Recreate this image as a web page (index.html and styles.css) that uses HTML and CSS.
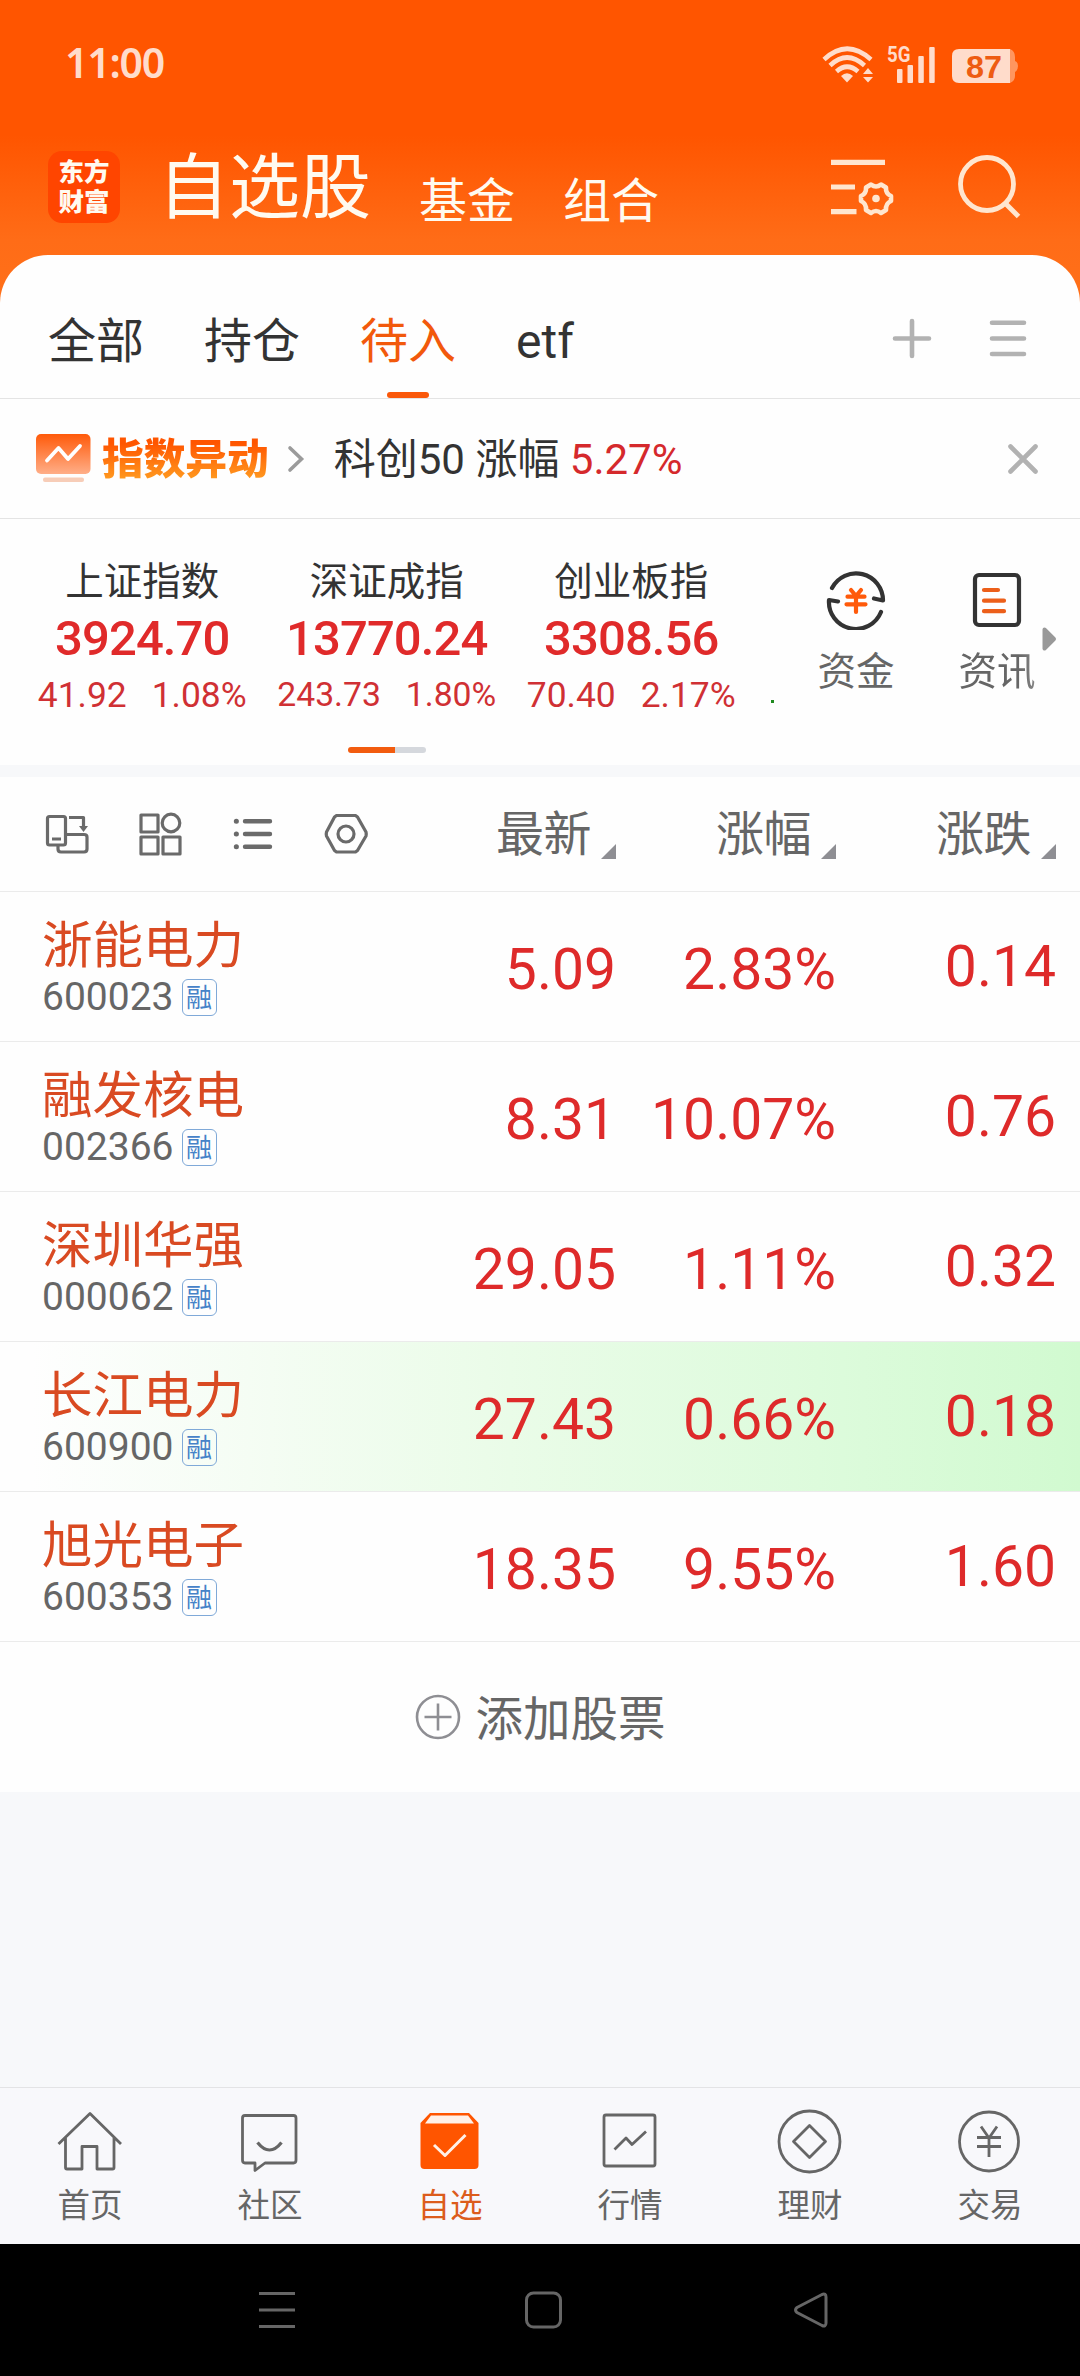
FILE: index.html
```html
<!DOCTYPE html>
<html lang="zh-CN">
<head>
<meta charset="utf-8">
<title>自选股</title>
<link rel="stylesheet" href="styles.css">
</head>
<body>
<div class="screen">
  <header class="top">
    <div class="status">
      <span class="clock">11:00</span>
      <svg class="status-icons" viewBox="820 40 200 46" width="200" height="46">
        <g fill="none" stroke="#ffdccb" stroke-width="4.6">
          <path d="M824 58.500Q847 37 871 58.500"/>
          <path d="M830 64.500Q847 48.500 864.500 64.500"/>
          <path d="M836.500 70.500Q847 61 858 70.500"/>
        </g>
        <g fill="#ffdccb">
          <path d="M841 75Q847 69.500 853 75L847 81.500Z"/>
          <path d="M868 67l5 6h-10zM868 81.500l5-5.500h-10z"/>
          <rect x="897" y="68" width="5.500" height="14" rx="1"/>
          <rect x="907.500" y="64" width="5.500" height="18" rx="1"/>
          <rect x="918.300" y="55" width="5.500" height="27" rx="1"/>
          <rect x="929.200" y="46" width="5.500" height="36" rx="1"/>
          <path d="M959 48H1010V82H959Q952 82 952 75V55Q952 48 959 48Z"/>
        </g>
        <path d="M1010 48Q1015 50 1015 56V60Q1018 61 1018 65T1015 71V75Q1015 80 1010 82Z" fill="#ff965f"/>
        <text class="net" x="887" y="61" textLength="23.500" lengthAdjust="spacingAndGlyphs">5G</text>
        <text class="charge" x="966" y="77" textLength="36" lengthAdjust="spacingAndGlyphs">87</text>
      </svg>
    </div>
    <div class="titlebar">
      <div class="logo"><span>东方</span><span>财富</span></div>
      <h1 class="title">自选股</h1>
      <span class="section">基金</span>
      <span class="section">组合</span>
      <svg class="title-icons" viewBox="828 155 194 66" width="194" height="66" fill="none" stroke="#ffe6cf">
        <path d="M831 168.300H885M831 193H855M831 217.700H856.500" stroke-width="5.200"/>
        <path d="M871 191Q876 195 881 191L886 194Q885.500 200 891 202.500V207.500Q885.500 210 886 216.500L881 219.500Q876 215.500 871 219.500L866 216.500Q866.500 210 861 207.500V202.500Q866.500 200 866 194Z" stroke-width="4.600" stroke-linejoin="round" transform="translate(0 -.5)"/>
        <circle cx="876" cy="204.500" r="3.800" fill="#ffe6cf" stroke="none"/>
        <circle cx="987" cy="190" r="26.500" stroke-width="4.800"/>
        <path d="M1005 209L1018.500 222.500" stroke-width="5"/>
      </svg>
    </div>
  </header>

  <main class="sheet">
    <nav class="tabs">
      <span class="tab">全部</span>
      <span class="tab">持仓</span>
      <span class="tab active">待入</span>
      <span class="tab">etf</span>
      <svg class="tab-icons" viewBox="890 315 140 46" width="140" height="46" fill="none" stroke="#b2b2b2" stroke-width="4.600" stroke-linecap="round">
        <path d="M895 338.500H929M912 321V356M992 322.700H1024M992 338.500H1024M992 354H1024"/>
      </svg>
    </nav>

    <section class="alert">
      <svg class="alert-icon" viewBox="36 434 55 51" width="55" height="51">
        <defs><linearGradient id="badge" x1="0" y1="0" x2="0" y2="1"><stop offset="0" stop-color="#ff5a0a"/><stop offset="1" stop-color="#ffae88"/></linearGradient></defs>
        <rect x="36" y="435" width="54.500" height="40" rx="5" fill="url(#badge)"/>
        <rect x="43" y="478.500" width="41" height="4.500" rx="2" fill="#f7cdb8"/>
        <path d="M47 461.500L58.500 449 68 460 80 447" fill="none" stroke="#fff" stroke-width="3.800" stroke-linecap="round" stroke-linejoin="round"/>
      </svg>
      <span class="alert-title">指数异动</span>
      <svg class="chevron" viewBox="0 0 18 28" width="18" height="28" fill="none" stroke="#9b9b9b" stroke-width="3.600" stroke-linecap="round"><path d="M3 3L14.500 14 3 25"/></svg>
      <span class="alert-text">科创50 涨幅 <em>5.27%</em></span>
      <svg class="close" viewBox="0 0 32 32" width="32" height="32" fill="none" stroke="#b2b2b2" stroke-width="4.600" stroke-linecap="round"><path d="M3.500 3.500L28.500 28.500M28.500 3.500L3.500 28.500"/></svg>
    </section>

    <section class="indices">
      <div class="index">
        <span class="index-name">上证指数</span><b class="index-value">3924.70</b>
        <span class="index-change"><i>41.92</i><i>1.08%</i></span>
      </div>
      <div class="index">
        <span class="index-name">深证成指</span><b class="index-value">13770.24</b>
        <span class="index-change small"><i>243.73</i><i>1.80%</i></span>
      </div>
      <div class="index">
        <span class="index-name">创业板指</span><b class="index-value">3308.56</b>
        <span class="index-change"><i>70.40</i><i>2.17%</i></span>
      </div>
      <span class="speck"></span>
      <div class="shortcut">
        <svg viewBox="826 570 60 60" width="60" height="60" fill="none" stroke="#333" stroke-width="4.200" stroke-linecap="round" stroke-linejoin="round">
          <path d="M832 588A27 27 0 0 1 883 600.500L874 598.500"/>
          <path d="M881 612A27 27 0 0 1 829 600L838 601.500"/>
          <path d="M851 590L856 596 861 590M847.500 596.700H864.500M846.500 604.300H865.500M856 596V612" stroke="#ff5a0a"/>
        </svg>
        <span>资金</span>
      </div>
      <div class="shortcut faded">
        <svg viewBox="967 570 60 60" width="60" height="60" fill="none" stroke="#333" stroke-width="4.200" stroke-linecap="round">
          <rect x="975" y="575" width="44" height="50" rx="4"/>
          <path d="M984 590H998M984 600.700H1004M984 611.200H1004" stroke="#ec5f1a"/>
        </svg>
        <span>资讯</span>
      </div>
      <svg class="more" viewBox="0 0 16 26" width="16" height="26"><path d="M3.500 3.500L13 13 3.500 22.500Z" fill="#999" stroke="#999" stroke-width="4" stroke-linejoin="round"/></svg>
      <span class="pager"></span>
    </section>

    <section class="table">
      <div class="thead">
        <svg class="tools" viewBox="44 810 326 48" width="326" height="48" fill="none" stroke="#6a6a6a" stroke-width="3.200" stroke-linejoin="round">
          <rect x="47.500" y="816.500" width="18" height="28.500" rx="2"/>
          <path d="M52 839H61M69 817.500H83.500V828M65.500 834.500H84Q87 834.500 87 837V849Q87 852 84 852H61Q58 852 58 849V845"/>
          <path d="M79 826H88L83.500 832Z" fill="#6a6a6a" stroke="none"/>
          <rect x="141" y="815" width="17" height="17"/><circle cx="171" cy="823" r="8.800"/>
          <rect x="141" y="837" width="17" height="17"/><rect x="163" y="837" width="17" height="17"/>
          <path d="M245 821.200H270M245 834H270M245 846.700H270" stroke-width="4.400" stroke-linecap="round"/>
          <path d="M236.300 821.200h.1M236.300 834h.1M236.300 846.700h.1" stroke-width="5" stroke-linecap="round"/>
          <path d="M336.500 815.500H355.500L357.500 817 366 832Q366.500 834 366 836L357.500 850.500 355.500 852H336.500L334.500 850.500 326.500 836Q326 834 326.500 832L334.500 817Z"/>
          <circle cx="346" cy="834" r="8"/>
        </svg>
        <span class="col c1">最新</span><span class="col c2">涨幅</span><span class="col c3">涨跌</span>
      </div>
      <div class="row">
        <div class="stock"><span class="name">浙能电力</span><span class="code">600023<i class="tag">融</i></span></div>
        <span class="num c1">5.09</span><span class="num c2">2.83%</span><span class="num c3">0.14</span>
      </div>
      <div class="row">
        <div class="stock"><span class="name">融发核电</span><span class="code">002366<i class="tag">融</i></span></div>
        <span class="num c1">8.31</span><span class="num c2">10.07%</span><span class="num c3">0.76</span>
      </div>
      <div class="row">
        <div class="stock"><span class="name">深圳华强</span><span class="code">000062<i class="tag">融</i></span></div>
        <span class="num c1">29.05</span><span class="num c2">1.11%</span><span class="num c3">0.32</span>
      </div>
      <div class="row flash">
        <div class="stock"><span class="name">长江电力</span><span class="code">600900<i class="tag">融</i></span></div>
        <span class="num c1">27.43</span><span class="num c2">0.66%</span><span class="num c3">0.18</span>
      </div>
      <div class="row">
        <div class="stock"><span class="name">旭光电子</span><span class="code">600353<i class="tag">融</i></span></div>
        <span class="num c1">18.35</span><span class="num c2">9.55%</span><span class="num c3">1.60</span>
      </div>
      <div class="add">
        <svg viewBox="0 0 46 46" width="46" height="46" fill="none" stroke="#8e8e93" stroke-width="2.600"><circle cx="23" cy="23" r="21"/><path d="M9.500 23H36.500M23 9.500V36.500"/></svg>
        <span>添加股票</span>
      </div>
    </section>
  </main>

  <nav class="bottom">
    <div class="item">
      <svg viewBox="54 2108 72 66" width="72" height="66"><path d="M58.500 2144L90 2113.500 121 2144M65.500 2138V2167.500Q65.500 2169 67 2169H82V2146.500H97V2169H112.500Q114 2169 114 2167.500V2138"/></svg>
      <span>首页</span>
    </div>
    <div class="item">
      <svg viewBox="234 2108 72 66" width="72" height="66"><path d="M245 2115.500H293.500Q296 2115.500 296 2118V2160Q296 2163 293.500 2163H265L255 2170.500V2163H245Q242.500 2163 242.500 2160V2118Q242.500 2115.500 245 2115.500Z"/><path d="M257.500 2142.500Q269.500 2157.500 281.500 2142.500" stroke-width="3.200"/></svg>
      <span>社区</span>
    </div>
    <div class="item current">
      <svg viewBox="414 2108 72 66" width="72" height="66"><path d="M420.500 2123L430 2113H469L478.500 2123V2165Q478.500 2169 474.500 2169H424.500Q420.500 2169 420.500 2165Z" fill="#ff5500" stroke="none"/><path d="M431 2115.500H468L474 2123.500H425Z" fill="#fff1e8" stroke="none"/><path d="M434 2145L445 2155.500 465.500 2135" stroke="#fff1e8" stroke-width="3"/></svg>
      <span>自选</span>
    </div>
    <div class="item">
      <svg viewBox="594 2108 72 66" width="72" height="66"><rect x="604" y="2115" width="51" height="51" rx="2"/><path d="M614.500 2149.500L626 2138 632 2144.500 646 2131.500"/></svg>
      <span>行情</span>
    </div>
    <div class="item">
      <svg viewBox="774 2108 72 66" width="72" height="66"><circle cx="809.500" cy="2141.500" r="30.500"/><path d="M809.500 2125.500L825.500 2141.500 809.500 2157.500 793.500 2141.500Z"/></svg>
      <span>理财</span>
    </div>
    <div class="item">
      <svg viewBox="954 2108 72 66" width="72" height="66"><circle cx="989" cy="2141.500" r="29.500"/><path d="M981 2126.500L989 2138 997 2126.500M977 2137.500H1001M977 2146.500H1001M989 2138V2157"/></svg>
      <span>交易</span>
    </div>
  </nav>

  <footer class="system">
    <svg viewBox="0 0 36 38" width="36" height="38"><path d="M0 2.500H36M0 19H36M0 35.500H36"/></svg>
    <svg viewBox="0 0 38 38" width="38" height="38"><rect x="1.500" y="2" width="34" height="34" rx="7"/></svg>
    <svg viewBox="0 0 36 38" width="36" height="38"><path d="M4 16.500L29 3.500Q33 2 33 6V32Q33 36 29 34.500L4 21.500Q1 19 4 16.500Z"/></svg>
  </footer>
</div>
</body>
</html>
```
FILE: styles.css
```css
* { box-sizing: border-box; }
html, body { margin: 0; }
body {
  font-family: Roboto, "Noto Sans CJK SC", sans-serif;
  color: #333;
  background: #f7f8fa;
}
i, em { font-style: normal; }
svg { display: block; flex: none; }
.screen {
  width: 1080px;
  height: 2376px;
  display: flex;
  flex-direction: column;
  overflow: hidden;
  background: linear-gradient(#ff5500 0, #ff5500 135px, #ff6c17 240px, #ff7019 300px, #f7f8fa 310px);
}

/* status bar and title */
.top { height: 255px; flex: none; }
.status {
  height: 127px;
  padding: 0 60px 0 65px;
  display: flex;
  justify-content: space-between;
  align-items: center;
}
.clock {
  margin-top: -3px;
  font: 600 41px/46px "Noto Sans", sans-serif;
  letter-spacing: -1.200px;
  color: #ffdccb;
}
.net { font: 700 22px Roboto, sans-serif; fill: #ffdccb; }
.charge { font: 700 32px "Liberation Sans", sans-serif; fill: #ee5c12; }
.titlebar {
  height: 128px;
  padding: 0 58px 0 48px;
  display: flex;
  align-items: flex-start;
  color: #fffaf0;
}
.logo {
  width: 72px;
  height: 72px;
  margin-top: 24px;
  padding-top: 6px;
  border-radius: 14px;
  background: #ff4500;
  display: flex;
  flex-direction: column;
  align-items: center;
  font-size: 25.500px;
  line-height: 30px;
  font-weight: 900;
}
.title {
  margin: 19px 48px 0 38px;
  font-size: 71px;
  line-height: 84px;
  font-weight: 400;
}
.section {
  margin: 45px 48px 0 0;
  font-size: 48px;
  line-height: 60px;
}
.title-icons { margin: 22px 0 0 auto; overflow: visible; }

/* white sheet */
.sheet {
  height: 1537px;
  flex: none;
  background: #fefefe;
  border-radius: 48px 48px 0 0;
}
.tabs {
  height: 144px;
  padding: 0 50px 0 48px;
  display: flex;
  align-items: stretch;
  gap: 60px;
  border-bottom: 1px solid #e4e4e4;
}
.tab {
  position: relative;
  font-size: 48px;
  line-height: 60px;
  padding-top: 57px;
}
.active { color: #f2590c; }
.active::after {
  content: "";
  position: absolute;
  left: 27px;
  bottom: 0;
  width: 42px;
  height: 6px;
  border-radius: 3px;
  background: #fa580a;
}
.tab-icons { margin: 60px 0 0 auto; }
.alert {
  height: 120px;
  padding: 0 41px 0 36px;
  display: flex;
  align-items: center;
  border-bottom: 1px solid #e4e4e4;
}
.alert-title {
  margin: 2px 18px 0 11px;
  font-size: 41.700px;
  line-height: 56px;
  font-weight: 900;
  color: transparent;
  background: linear-gradient(#ff5500 20%, #ff9a20 85%);
  background-clip: text;
  -webkit-background-clip: text;
}
.alert-text {
  margin: 2px 0 0 29px;
  font-size: 42px;
  line-height: 56px;
  white-space: pre;
}
.alert-text em { color: #d5292c; }
.close { margin-left: auto; }

/* index strip */
.indices {
  position: relative;
  height: 246px;
  padding-left: 20px;
  display: flex;
}
.index {
  width: 244.500px;
  flex: none;
  padding-top: 38px;
  display: flex;
  flex-direction: column;
  align-items: center;
  white-space: nowrap;
}
.index-name { font-size: 38.500px; line-height: 50px; }
.index-value {
  margin-top: 2px;
  font-size: 49px;
  line-height: 60px;
  font-weight: 500;
  letter-spacing: -.9px;
  color: #e02a2a;
}
.index-change {
  display: flex;
  gap: 25px;
  font-size: 35.400px;
  line-height: 52px;
  color: #d03034;
}
.small { font-size: 33.700px; line-height: 52px; }
.speck {
  width: 3px;
  height: 3px;
  margin: 181px 0 0 17px;
  background: #1f8a1f;
}
.shortcut {
  width: 141px;
  padding-top: 51px;
  display: flex;
  flex-direction: column;
  align-items: center;
  font-size: 38.500px;
  line-height: 50px;
  color: #666;
}
.shortcut:nth-of-type(4) { margin-left: 12px; }
.shortcut span { margin-top: 17px; }
.faded {
  -webkit-mask-image: linear-gradient(90deg, #000 65%, rgba(0, 0, 0, .4) 100%);
  mask-image: linear-gradient(90deg, #000 65%, rgba(0, 0, 0, .4) 100%);
}
.more { position: absolute; left: 1041px; top: 107px; }
.pager {
  position: absolute;
  left: 348px;
  top: 228px;
  width: 78px;
  height: 6px;
  border-radius: 3px;
  background: linear-gradient(90deg, #f25c0f 47px, #d5d8dd 47px);
}

/* watch list */
.table { border-top: 12px solid #f7f8fa; }
.thead, .row {
  display: grid;
  grid-template-columns: 416px 200px 220px 220px;
  border-bottom: 1px solid #ebebeb;
}
.thead { height: 115px; }
.tools { margin: 33px 0 0 44px; }
.col {
  justify-self: end;
  display: flex;
  align-items: flex-start;
  gap: 10px;
  padding-top: 28px;
  font-size: 48px;
  line-height: 60px;
  letter-spacing: -.5px;
  color: #666;
}
.col::after {
  content: "";
  margin-top: 39px;
  border-left: 15px solid transparent;
  border-bottom: 15px solid #8e8e93;
}
.row { height: 150px; }
.flash { background: linear-gradient(90deg, #fefefe 3%, #ebfce9 45%, #dcfbdb 78%, #d1fad0 100%); }
.stock {
  padding: 23px 0 0 42px;
  display: flex;
  flex-direction: column;
}
.name { font-size: 50.500px; line-height: 62px; color: #d94a22; }
.code {
  display: flex;
  align-items: center;
  gap: 8px;
  font-size: 39px;
  line-height: 40px;
  color: #666;
}
.tag {
  width: 35px;
  height: 37px;
  border: 1.500px solid #7fa9d8;
  border-radius: 6px;
  font-size: 26px;
  line-height: 36px;
  text-align: center;
  color: #4682c8;
}
.num {
  justify-self: end;
  padding-top: 43px;
  font-size: 57px;
  line-height: 70px;
  color: #de2a2a;
}
.num.c3 { padding-top: 40px; }
.add {
  height: 150px;
  display: flex;
  align-items: center;
  justify-content: center;
  gap: 15px;
  font-size: 47.500px;
  line-height: 60px;
  color: #666;
}
.add span { margin-top: 5px; }

/* bottom tab bar */
.bottom {
  height: 157px;
  flex: none;
  margin-top: auto;
  display: flex;
  background: #f8f8fb;
  border-top: 1px solid #e3e3e5;
  box-shadow: 0 -295px 0 0 #f7f8fa;
}
.item {
  width: 180px;
  padding-top: 20px;
  display: flex;
  flex-direction: column;
  align-items: center;
  font-size: 32.500px;
  line-height: 40px;
  color: #666;
}
.item svg { fill: none; stroke: #666; stroke-width: 2.800px; stroke-linejoin: round; }
.item span { margin-top: 12px; }
.item.current { color: #dc5c1c; }

/* system navigation */
.system {
  height: 132px;
  flex: none;
  padding: 47px 251px 0 259px;
  display: flex;
  justify-content: space-between;
  background: #000;
}
.system svg { fill: none; stroke: #666; stroke-width: 3px; }
```
